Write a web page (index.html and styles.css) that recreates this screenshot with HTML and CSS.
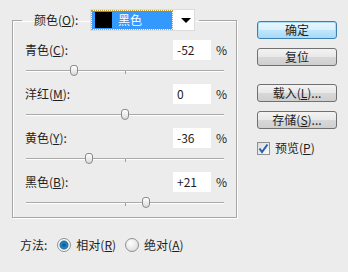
FILE: index.html
```html
<!DOCTYPE html>
<html lang="zh-CN">

<head>
    <meta charset="UTF-8">
    <meta name="viewport" content="width=device-width, initial-scale=1.0">
    <title>可选颜色</title>
    <link rel="stylesheet" href="styles.css">
</head>

<body>
    <div class="dialog">
        <div class="main">
            <fieldset class="group">
                <legend class="group-head">
                    <label class="head-label">颜色(<u>O</u>):</label>
                    <div class="select">
                        <span class="select-value"><span class="swatch"></span>黑色</span>
                        <span class="select-arrow"></span>
                    </div>
                </legend>

                <div class="row">
                    <div class="row-head">
                        <label class="row-label">青色(<u>C</u>):</label>
                        <span class="num">-52</span>
                        <span class="pct">%</span>
                    </div>
                    <div class="slider">
                        <div class="track"></div>
                        <div class="tick"></div>
                        <div class="thumb" style="left: 43.5px"></div>
                    </div>
                </div>

                <div class="row">
                    <div class="row-head">
                        <label class="row-label">洋红(<u>M</u>):</label>
                        <span class="num">0</span>
                        <span class="pct">%</span>
                    </div>
                    <div class="slider">
                        <div class="track"></div>
                        <div class="tick"></div>
                        <div class="thumb" style="left: 95px"></div>
                    </div>
                </div>

                <div class="row">
                    <div class="row-head">
                        <label class="row-label">黄色(<u>Y</u>):</label>
                        <span class="num">-36</span>
                        <span class="pct">%</span>
                    </div>
                    <div class="slider">
                        <div class="track"></div>
                        <div class="tick"></div>
                        <div class="thumb" style="left: 59.4px"></div>
                    </div>
                </div>

                <div class="row">
                    <div class="row-head">
                        <label class="row-label">黑色(<u>B</u>):</label>
                        <span class="num">+21</span>
                        <span class="pct">%</span>
                    </div>
                    <div class="slider">
                        <div class="track"></div>
                        <div class="tick"></div>
                        <div class="thumb" style="left: 115.8px"></div>
                    </div>
                </div>
            </fieldset>

            <div class="buttons">
                <a href="javascript:" class="btn btn-default">确定</a>
                <a href="javascript:" class="btn">复位</a>
                <a href="javascript:" class="btn btn-sep">载入(<u>L</u>)...</a>
                <a href="javascript:" class="btn">存储(<u>S</u>)...</a>
                <label class="check">
                    <span class="check-box">
                        <svg width="11" height="11" viewBox="0 0 11 11">
                            <path d="M1.5 5.5 L4 9 L9.5 1.5" fill="none" stroke="#2a5fae" stroke-width="2" />
                        </svg>
                    </span>
                    预览(<u>P</u>)
                </label>
            </div>
        </div>

        <div class="method">
            <span class="method-label">方法:</span>
            <span class="radio checked"></span>
            <span class="radio-label">相对(<u>R</u>)</span>
            <span class="radio radio-second"></span>
            <span class="radio-label">绝对(<u>A</u>)</span>
        </div>
    </div>
</body>

</html>
```

FILE: styles.css
```css
* {
    margin: 0;
    padding: 0;
    box-sizing: border-box;
}

body {
    background-color: #ececec;
    font-family: "Noto Sans CJK SC", "Liberation Sans", sans-serif;
    font-size: 12px;
    color: #1e1e1e;
    line-height: 16px;
}

u {
    text-decoration: underline;
    text-underline-offset: 1px;
}

.dialog {
    width: 348px;
    height: 272px;
    padding-top: 9px;
}

.main {
    display: flex;
}

/* 分组框 */
.group {
    margin-left: 12px;
    width: 225px;
    border: 1px solid #a7a7a7;
    box-shadow: inset 1px 1px 0 #fff, 1px 1px 0 #fff;
    padding: 9px 8px 9px 12px;
}

.group-head {
    display: flex;
    align-items: center;
    margin-left: -3px;
    padding: 0 4px 0 12px;
    height: 22px;
}

.head-label {
    width: 56px;
}

.select {
    display: flex;
    align-items: center;
    width: 105px;
    height: 22px;
    background-color: #fff;
    border: 1px solid #dcdcdc;
    padding: 1px;
}

.select-value {
    display: flex;
    align-items: center;
    width: 80px;
    height: 18px;
    background-color: #3399ff;
    outline: 1px dotted #c9a23a;
    color: #fff;
    padding-left: 3px;
}

.swatch {
    width: 17px;
    height: 16px;
    background-color: #000;
    margin-right: 6px;
}

.select-arrow {
    margin-left: 9px;
    width: 0;
    height: 0;
    border-left: 5px solid transparent;
    border-right: 5px solid transparent;
    border-top: 5px solid #000;
}

/* 每一行 */
.row {
    margin-bottom: 8px;
}

.row:last-child {
    margin-bottom: 0;
}

.row-head {
    display: flex;
    align-items: center;
    height: 20px;
}

.row-label {
    flex: 1;
}

.num {
    width: 38px;
    height: 20px;
    background-color: #fff;
    padding: 2px 0 0 4px;
}

.pct {
    margin-left: 5px;
    width: 12px;
}

.slider {
    position: relative;
    margin-left: 1px;
    width: 198px;
    height: 16px;
}

.track {
    position: absolute;
    left: 0;
    right: 0;
    top: 10px;
    border-top: 1px solid #a9a9a9;
    border-bottom: 1px solid #fff;
}

.tick {
    position: absolute;
    left: 99px;
    top: 11px;
    width: 1px;
    height: 3px;
    background-color: #a0a0a0;
}

.thumb {
    position: absolute;
    top: 5px;
    width: 8px;
    height: 11px;
    border: 1px solid #8a8a8a;
    border-radius: 3px 3px 4px 4px;
    background: linear-gradient(#ffffff, #dadada);
}

/* 右侧按钮 */
.buttons {
    margin-left: 20px;
    padding-top: 12px;
    display: flex;
    flex-direction: column;
    width: 80px;
}

.btn {
    display: flex;
    justify-content: center;
    align-items: center;
    height: 18px;
    margin-bottom: 9px;
    border: 1px solid #707070;
    border-radius: 3px;
    background: linear-gradient(#f3f3f3 0%, #e8e8e8 50%, #d8d8d8 51%, #cfcfcf 100%);
    color: #1e1e1e;
    text-decoration: none;
}

.btn-default {
    border-color: #3c7fb1;
    box-shadow: inset 0 0 0 1px #a8dbf6;
    background: linear-gradient(#eaf6fd 0%, #d9f0fc 50%, #bee6fd 51%, #a7d9f5 100%);
}

.btn-sep {
    margin-top: 9px;
}

.check {
    display: flex;
    align-items: center;
    margin-top: 3px;
    height: 14px;
}

.check-box {
    display: flex;
    justify-content: center;
    align-items: center;
    width: 13px;
    height: 13px;
    border: 1px solid #8e8f8f;
    background: linear-gradient(135deg, #dcdcdc, #fafafa);
    margin-right: 5px;
}

/* 方法 */
.method {
    display: flex;
    align-items: center;
    padding-left: 20px;
    margin-top: 19px;
    height: 16px;
}

.radio {
    margin-left: 10px;
    width: 14px;
    height: 14px;
    border-radius: 50%;
    border: 1px solid #8e8f8f;
    background: radial-gradient(circle at 40% 35%, #ffffff, #d4d4d4);
}

.radio.checked {
    background: radial-gradient(circle at 50% 50%, #0d4f85 0, #1d87c7 3px, #2d6f9a 4px, #ffffff 5px, #d4d4d4 100%);
}

.radio-second {
    margin-left: 9px;
}

.radio-label {
    margin-left: 5px;
}
```
